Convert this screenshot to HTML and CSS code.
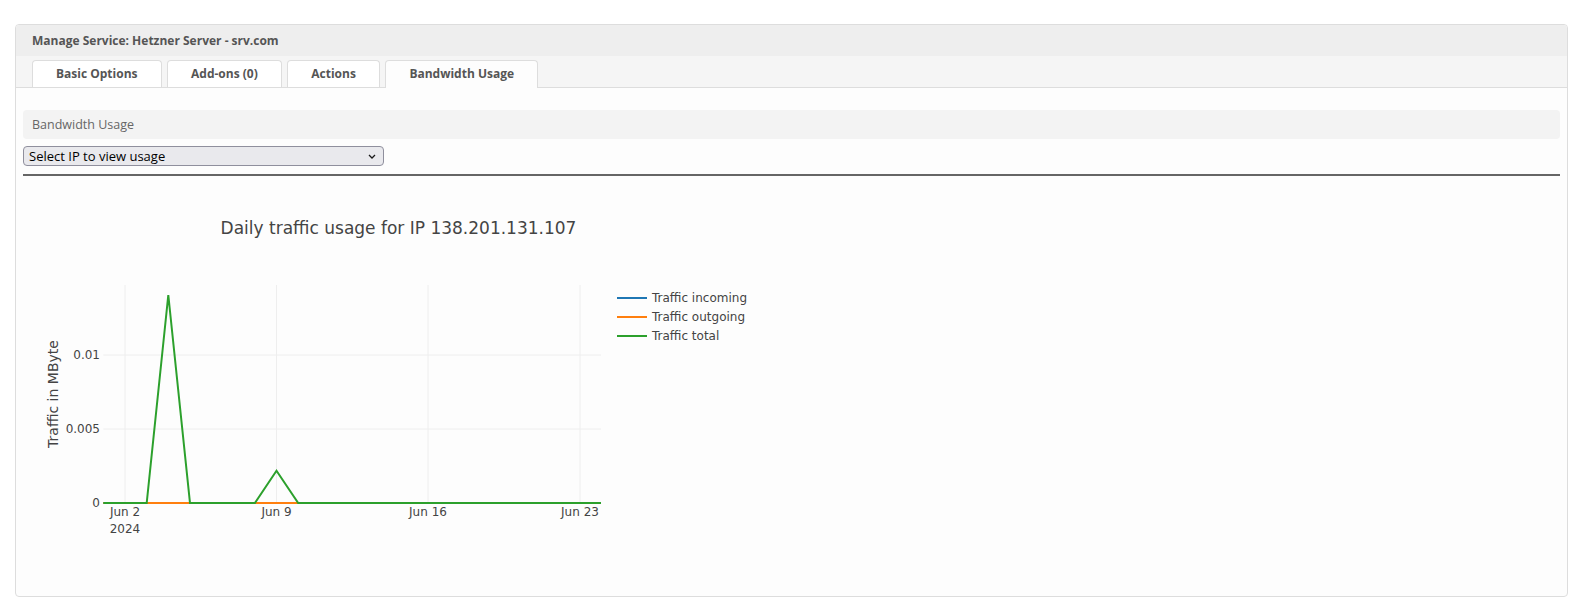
FILE: index.html
```html
<!DOCTYPE html>
<html lang="en">
<head>
    <meta charset="UTF-8">
    <meta name="viewport" content="width=device-width, initial-scale=1.0">
    <title>Manage Service - Bandwidth Usage</title>
    <link rel="stylesheet" href="styles.css">
</head>
<body>
    <div class="page">
        <!-- service panel -->
        <div class="panel">
            <div class="panel-heading">Manage Service: Hetzner Server - srv.com</div>

            <!-- tabs -->
            <ul class="tabs">
                <li class="tab">Basic Options</li>
                <li class="tab">Add-ons (0)</li>
                <li class="tab">Actions</li>
                <li class="tab active">Bandwidth Usage</li>
            </ul>

            <div class="panel-body">
                <div class="section-title">Bandwidth Usage</div>

                <div class="ip-select">
                    <select id="ipSelect">
                        <option>Select IP to view usage</option>
                        <option>138.201.131.107</option>
                    </select>
                    <svg class="chevron" width="8" height="5" viewBox="0 0 8 5">
                        <path d="M1 1 L4 4 L7 1" fill="none" stroke="#1a1a1a" stroke-width="1.3"/>
                    </svg>
                </div>

                <hr class="divider">

                <!-- traffic chart -->
                <svg class="chart" width="780" height="410" viewBox="0 0 780 410">
                    <text class="chart-title" x="375.5" y="58" text-anchor="middle">Daily traffic usage for IP 138.201.131.107</text>

                    <g class="grid">
                        <line x1="102" y1="109" x2="102" y2="327"/>
                        <line x1="253.5" y1="109" x2="253.5" y2="327"/>
                        <line x1="405" y1="109" x2="405" y2="327"/>
                        <line x1="557" y1="109" x2="557" y2="327"/>
                        <line x1="80.4" y1="179" x2="578" y2="179"/>
                        <line x1="80.4" y1="253" x2="578" y2="253"/>
                    </g>
                    <line class="zero-line" x1="80.4" y1="327" x2="578" y2="327"/>

                    <polyline class="trace incoming" points="80.4,327 578,327"/>
                    <polyline class="trace outgoing" points="80.4,327 578,327"/>
                    <polyline class="trace total" points="80.4,327 123.7,327 145.3,119 167,327 231.9,327 253.5,294.7 275.2,327 578,327"/>

                    <g class="tick-labels">
                        <text x="77" y="183" text-anchor="end">0.01</text>
                        <text x="77" y="257" text-anchor="end">0.005</text>
                        <text x="77" y="331" text-anchor="end">0</text>
                        <text x="102" y="340" text-anchor="middle">Jun 2</text>
                        <text x="102" y="357" text-anchor="middle">2024</text>
                        <text x="253.5" y="340" text-anchor="middle">Jun 9</text>
                        <text x="405" y="340" text-anchor="middle">Jun 16</text>
                        <text x="557" y="340" text-anchor="middle">Jun 23</text>
                    </g>
                    <text class="axis-title" transform="translate(34.5,218) rotate(-90)" text-anchor="middle">Traffic in MByte</text>

                    <!-- legend -->
                    <g class="legend">
                        <line class="incoming" x1="594" y1="122" x2="624" y2="122"/>
                        <text x="629" y="126">Traffic incoming</text>
                        <line class="outgoing" x1="594" y1="141" x2="624" y2="141"/>
                        <text x="629" y="145">Traffic outgoing</text>
                        <line class="total" x1="594" y1="160" x2="624" y2="160"/>
                        <text x="629" y="164">Traffic total</text>
                    </g>
                </svg>
            </div>
        </div>
    </div>
</body>
</html>
```

FILE: styles.css
```css
/* base */
* {
    box-sizing: border-box;
}

body {
    margin: 0;
    font-family: "Open Sans", "Noto Sans", Arial, sans-serif;
    color: #333;
    background-color: #fff;
}

.page {
    padding: 24px 16px 0 15px;
}

/* panel */
.panel {
    border: 1px solid #ddd;
    border-radius: 4px;
    background-color: #fdfdfd;
    overflow: hidden;
}

.panel-heading {
    height: 31px;
    line-height: 31px;
    padding-left: 16px;
    background-color: #eee;
    font-size: 12px;
    font-weight: 700;
    color: #555;
}

/* tabs */
.tabs {
    display: flex;
    align-items: flex-start;
    gap: 5.5px;
    margin: 0;
    padding: 4px 0 0 16px;
    list-style: none;
    background-color: #f5f5f5;
    border-bottom: 1px solid #ddd;
}

.tab {
    height: 27px;
    line-height: 26px;
    padding: 0 23px;
    background-color: #fff;
    border: 1px solid #ddd;
    border-bottom: none;
    border-radius: 4px 4px 0 0;
    font-size: 12px;
    font-weight: 700;
    color: #555;
}

.tab.active {
    height: 28px;
    margin-bottom: -1px;
    background-color: #fdfdfd;
}

/* body */
.panel-body {
    padding: 22px 7px 10px 7px;
}

.section-title {
    height: 29px;
    line-height: 29px;
    padding-left: 9px;
    background-color: #f3f3f3;
    border-radius: 4px;
    font-size: 12.5px;
    color: #666;
}

.ip-select {
    position: relative;
    width: 361px;
    margin-top: 7px;
}

.ip-select select {
    display: block;
    width: 100%;
    height: 20px;
    padding: 0 0 0 5px;
    appearance: none;
    -webkit-appearance: none;
    background-color: #e9e9ed;
    border: 1px solid #8f8f9d;
    border-radius: 4px;
    font-family: "Open Sans", "Noto Sans", Arial, sans-serif;
    font-size: 13px;
    color: #000;
}

.chevron {
    position: absolute;
    right: 8px;
    top: 8px;
}

.divider {
    height: 0;
    margin: 8px 0 0;
    border: 0;
    border-top: 2px solid #666;
}

/* chart */
.chart {
    display: block;
    font-family: "DejaVu Sans", Verdana, sans-serif;
}

.chart-title {
    font-size: 17px;
    fill: #444;
}

.grid line {
    stroke: #eee;
    stroke-width: 1;
}

.zero-line {
    stroke: #444;
    stroke-width: 1;
}

.trace {
    fill: none;
    stroke-width: 2;
}

.incoming {
    stroke: #1f77b4;
    stroke-width: 2;
}

.outgoing {
    stroke: #ff7f0e;
    stroke-width: 2;
}

.total {
    stroke: #2ca02c;
    stroke-width: 2;
}

.tick-labels text,
.legend text {
    font-size: 12px;
    fill: #444;
}

.axis-title {
    font-size: 14px;
    fill: #444;
}
```
